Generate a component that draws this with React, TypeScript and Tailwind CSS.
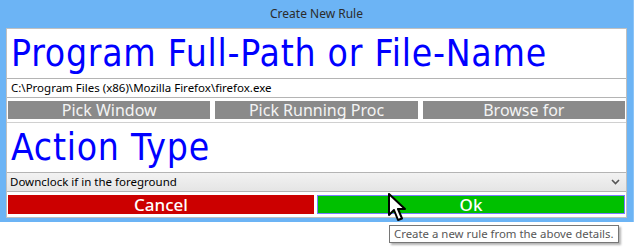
import React from 'react';

const big = "font-['DejaVu_Sans_Condensed','DejaVu_Sans',sans-serif] text-[#0000ff] tracking-[0.75px]";
const ui = "font-['Noto_Sans','Open_Sans',sans-serif]";

const GrayButton: React.FC<{ label: string }> = ({ label }) => (
  <div className={`flex-1 h-[18px] bg-[#8a8a8a] text-[#f4f4f4] text-[16px] leading-[18px] text-center ${ui}`}>
    {label}
  </div>
);

const Cursor = () => (
  <svg width="22" height="30" viewBox="0 0 22 30" className="absolute left-[388px] top-[193px]">
    <path
      d="M1 1 L1 22 L6 17 L10 27 L14 25.5 L10 16 L17 16 Z"
      fill="#fff"
      stroke="#000"
      strokeWidth="2"
      strokeLinejoin="round"
    />
  </svg>
);

export default function App() {
  return (
    <div className="relative w-[636px] h-[250px] bg-white overflow-hidden">
      {/* window frame */}
      <div className="w-[634px] h-[222px] bg-[#6cb4f5] border-r border-[#8cc4f7] flex flex-col">
        <div className={`h-[28px] flex items-center justify-center text-[12px] text-[#2b2b2b] ${ui}`}>
          Create New Rule
        </div>
        <div className="ml-[6px] w-[621px] bg-white border border-[#c0c0c0] flex flex-col">
          <div className={`h-[49px] pl-[4px] text-[37px] leading-[50px] ${big}`}>
            Program Full-Path or File-Name
          </div>
          <div className={`h-[20px] border-y border-[#b4b4b4] pl-[4px] text-[11.5px] leading-[18px] text-black ${ui}`}>
            C:\Program Files (x86)\Mozilla Firefox\firefox.exe
          </div>
          <div className="flex gap-[5px] px-[1px] py-[3px] border-b border-[#d0d0d0]">
            <GrayButton label="Pick Window" />
            <GrayButton label="Pick Running Proc" />
            <GrayButton label="Browse for" />
          </div>
          <div className={`h-[49px] pl-[4px] text-[37px] leading-[50px] ${big}`}>Action Type</div>
          <div
            className={`h-[20px] border-y border-[#b4b4b4] bg-gradient-to-b from-[#f2f2f2] to-[#e5e5e5] pl-[3px] pr-[6px] flex items-center justify-between text-[11.5px] text-black ${ui}`}
          >
            <span>Downclock if in the foreground</span>
            <svg width="9" height="6" viewBox="0 0 9 6">
              <path d="M1 1 L4.5 4.5 L8 1" fill="none" stroke="#555" strokeWidth="1.6" />
            </svg>
          </div>
          <div className="flex gap-[3px] px-[1px] pt-[3px] pb-[3px]">
            <div
              className={`flex-1 h-[19px] bg-[#cc0000] text-white text-[17px] font-medium leading-[19px] text-center ${ui}`}
            >
              Cancel
            </div>
            <div
              className={`flex-1 h-[19px] bg-[#00c000] border border-[#7a7aff] text-white text-[17px] font-medium leading-[17px] text-center ${ui}`}
            >
              Ok
            </div>
          </div>
        </div>
      </div>

      {/* tooltip */}
      <div
        className={`absolute left-[389px] top-[225px] h-[18px] px-[4px] border border-[#767676] bg-white text-[11.4px] leading-[16px] text-[#575757] shadow-[2px_2px_2px_rgba(0,0,0,0.3)] ${ui}`}
      >
        Create a new rule from the above details.
      </div>
      <Cursor />
    </div>
  );
}
